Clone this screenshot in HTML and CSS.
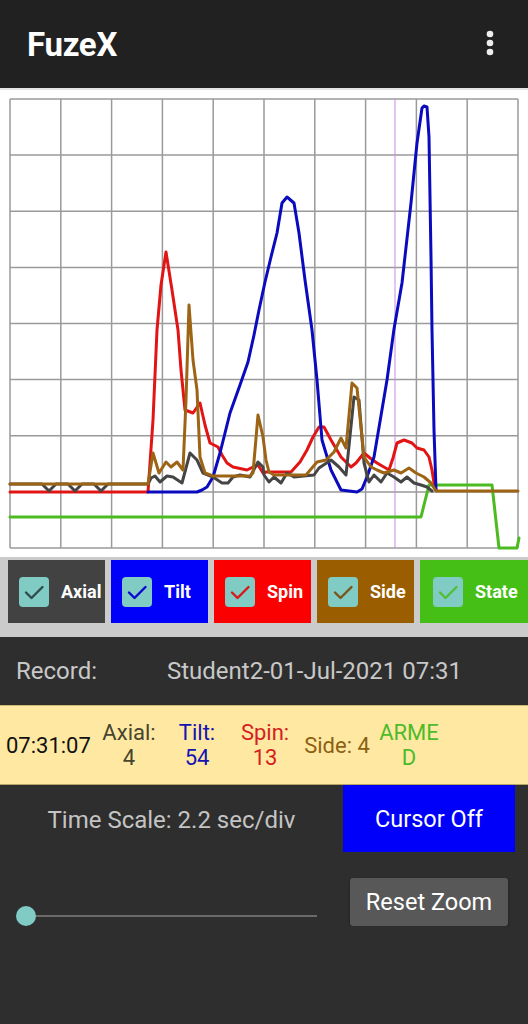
FILE: index.html
```html
<!DOCTYPE html>
<html>
<head>
  <meta charset="UTF-8">
  <title>FuzeX</title>
  <link rel="stylesheet" href="styles.css">
</head>
<body>
  <header class="app-bar">
    <h1 class="title">FuzeX</h1>
    <svg class="menu" width="8" height="26" viewBox="0 0 8 26">
      <circle cx="4" cy="4" r="3.3" fill="#eee"/>
      <circle cx="4" cy="13" r="3.3" fill="#eee"/>
      <circle cx="4" cy="22" r="3.3" fill="#eee"/>
    </svg>
  </header>

  <section class="chart-panel">
    <svg class="chart" width="528" height="467" viewBox="0 90 528 467">
      <g class="grid" stroke="#9a9a9a" stroke-width="1.5">
        <line x1="10" y1="99" x2="10" y2="548"/>
        <line x1="60.8" y1="99" x2="60.8" y2="548"/>
        <line x1="111.6" y1="99" x2="111.6" y2="548"/>
        <line x1="162.4" y1="99" x2="162.4" y2="548"/>
        <line x1="213.2" y1="99" x2="213.2" y2="548"/>
        <line x1="264" y1="99" x2="264" y2="548"/>
        <line x1="314.8" y1="99" x2="314.8" y2="548"/>
        <line x1="365.6" y1="99" x2="365.6" y2="548"/>
        <line x1="416.4" y1="99" x2="416.4" y2="548"/>
        <line x1="467.2" y1="99" x2="467.2" y2="548"/>
        <line x1="518" y1="99" x2="518" y2="548"/>
        <line x1="10" y1="99" x2="518" y2="99"/>
        <line x1="10" y1="155.1" x2="518" y2="155.1"/>
        <line x1="10" y1="211.3" x2="518" y2="211.3"/>
        <line x1="10" y1="267.4" x2="518" y2="267.4"/>
        <line x1="10" y1="323.5" x2="518" y2="323.5"/>
        <line x1="10" y1="379.6" x2="518" y2="379.6"/>
        <line x1="10" y1="435.8" x2="518" y2="435.8"/>
        <line x1="10" y1="491.9" x2="518" y2="491.9"/>
        <line x1="10" y1="548" x2="518" y2="548"/>
      </g>
      <line x1="395" y1="99" x2="395" y2="548" stroke="#c58ae0" stroke-width="1"/>

      <g fill="none" stroke-width="3" stroke-linejoin="round" stroke-linecap="round">
        <!-- state -->
        <polyline stroke="#4cbb22" points="10,517 421,517 429,485 492,485 499,548 517,548 519,538"/>
        <!-- spin -->
        <polyline stroke="#e21414" points="10,492 148,492 153,420 157,330 161,285 166,252 172,290 178,330 181,370 185,410 193,413 200,403 205,425 210,443 218,447 222,455 227,463 233,467 247,470 253,467 258,465 263,473 266,472 291,472 300,462 307,450 313,437 319,427 324,427 331,440 341,457 351,467 356,463 364,453 370,458 377,463 389,470 393,458 397,443 404,440 412,443 417,448 424,450 429,457 432,470 434,483 436,490"/>
        <!-- tilt -->
        <polyline stroke="#0a0abe" points="148,492 197,492 202,490 207,487 213,477 220,453 230,413 240,385 248,362 254,335 259,310 265,282 271,257 277,233 282,203 287,197 294,203 299,233 305,280 312,330 317,380 322,440 331,470 341,490 357,492 362,489 367,477 374,457 387,380 394,329 402,283 411,203 417,143 422,108 424,106 427,107 429,137 431,257 432,330 434,430 436,490"/>
        <!-- axial -->
        <polyline stroke="#454545" points="10,484 42,484 49,491 56,484 68,484 75,491 82,484 94,484 101,491 108,484 148,484 151,478 155,476 160,482 167,476 173,477 182,483 190,453 197,460 203,473 213,477 222,483 228,483 233,477 240,475 250,477 258,462 263,467 264,475 269,482 274,477 281,483 287,473 294,477 314,475 319,468 331,460 339,467 346,475 354,397 359,400 364,463 369,482 374,475 381,482 387,473 394,477 401,482 407,477 414,483 421,485 427,487 432,491"/>
        <!-- side -->
        <polyline stroke="#9c6414" points="10,484 148,484 153,453 159,473 166,462 171,467 177,462 183,470 186,400 189,305 193,360 197,390 200,457 205,473 213,476 250,476 253,473 258,415 263,437 266,460 269,472 274,475 306,475 317,462 326,460 334,452 341,438 346,448 352,383 357,388 364,457 371,467 377,470 384,473 394,470 401,473 409,468 416,473 424,477 431,483 436,491 518,491"/>
      </g>
    </svg>
  </section>

  <div class="legend">
    <label class="legend-item axial">
      <svg class="check" viewBox="0 0 30 30"><path d="M7 15.5l5.5 5.5L23.5 10" stroke="#2f4d4b"/></svg>
      <span class="legend-label">Axial</span>
    </label>
    <label class="legend-item tilt">
      <svg class="check" viewBox="0 0 30 30"><path d="M7 15.5l5.5 5.5L23.5 10" stroke="#0808d0"/></svg>
      <span class="legend-label">Tilt</span>
    </label>
    <label class="legend-item spin">
      <svg class="check" viewBox="0 0 30 30"><path d="M7 15.5l5.5 5.5L23.5 10" stroke="#d81818"/></svg>
      <span class="legend-label">Spin</span>
    </label>
    <label class="legend-item side">
      <svg class="check" viewBox="0 0 30 30"><path d="M7 15.5l5.5 5.5L23.5 10" stroke="#7a5418"/></svg>
      <span class="legend-label">Side</span>
    </label>
    <label class="legend-item state">
      <svg class="check" viewBox="0 0 30 30"><path d="M7 15.5l5.5 5.5L23.5 10" stroke="#52be36"/></svg>
      <span class="legend-label">State</span>
    </label>
  </div>

  <div class="record">
    <span class="record-label">Record:</span>
    <span class="record-name">Student2-01-Jul-2021 07:31</span>
  </div>

  <div class="readout">
    <span class="reading time">07:31:07</span>
    <span class="reading axial-val">Axial:<br>4</span>
    <span class="reading tilt-val">Tilt:<br>54</span>
    <span class="reading spin-val">Spin:<br>13</span>
    <span class="reading side-val">Side: 4</span>
    <span class="reading state-val">ARMED</span>
  </div>

  <div class="controls">
    <div class="controls-row">
      <span class="time-scale">Time Scale: 2.2 sec/div</span>
      <button class="btn-cursor">Cursor Off</button>
    </div>
    <div class="controls-row zoom-row">
      <div class="slider">
        <span class="slider-track"></span>
        <span class="slider-thumb"></span>
      </div>
      <button class="btn-reset">Reset Zoom</button>
    </div>
  </div>
</body>
</html>
```

FILE: styles.css
```css
body {
  margin: 0;
  background: #2e2e2e;
  font-family: Roboto, "Noto Sans", sans-serif;
  overflow: hidden;
}
.app-bar {
  height: 88px;
  background: #212121;
  border-bottom: 2px solid #e4e4e4;
  display: flex;
  align-items: center;
  justify-content: space-between;
  padding: 0 34px 0 27px;
}
.title {
  margin: 0;
  font-size: 33px;
  font-weight: 700;
  color: #fff;
  letter-spacing: -0.3px;
}
.menu {
  display: block;
  margin-top: -2px;
}
.chart-panel {
  background: #fff;
  height: 467px;
}
.chart {
  display: block;
}
.legend {
  height: 80px;
  box-sizing: border-box;
  padding: 3px 0 0 8px;
  background: #cbcbcb;
  display: flex;
  gap: 6px;
  overflow: hidden;
}
.legend-item {
  flex: 0 0 97px;
  height: 63px;
  box-sizing: border-box;
  padding-left: 11px;
  display: flex;
  align-items: center;
  color: #fff;
  font-size: 18px;
  font-weight: 700;
  white-space: nowrap;
}
.legend-item.axial { background: #424242; }
.legend-item.tilt { background: #0000fa; }
.legend-item.spin { background: #fb0000; }
.legend-item.side { background: #9a5d00; }
.legend-item.state { background: #45bf16; flex-basis: 120px; padding-left: 13px; }
.check {
  width: 30px;
  height: 30px;
  flex-shrink: 0;
  margin-right: 12px;
  background: #80cbc4;
  border-radius: 4px;
}
.check path {
  fill: none;
  stroke-width: 2.4;
  stroke-linecap: round;
  stroke-linejoin: round;
}
.record {
  height: 68px;
  display: flex;
  align-items: center;
  padding-left: 16px;
  color: #c8c8c8;
  font-size: 24px;
}
.record-label {
  width: 151px;
}
.readout {
  height: 80px;
  box-sizing: border-box;
  background: #ffe9a2;
  border-top: 1px solid #cbb977;
  border-bottom: 1px solid #b5a466;
  display: flex;
  align-items: center;
  gap: 4px;
  padding-left: 6px;
  font-size: 22px;
  line-height: 25px;
}
.reading {
  width: 64px;
  text-align: center;
}
.reading.time { width: 87px; text-align: left; color: #111; }
.axial-val { color: #47442f; }
.tilt-val { color: #1414b4; }
.spin-val { color: #d42020; }
.side-val { color: #8c6012; width: 72px; }
.state-val { color: #4cbb2a; word-break: break-all; }
.controls-row {
  display: flex;
  align-items: center;
}
.time-scale {
  flex: 1;
  text-align: center;
  color: #c4c4c4;
  font-size: 24px;
  padding-top: 2px;
}
.btn-cursor {
  width: 172px;
  height: 67px;
  margin-right: 13px;
  border: none;
  background: #0000fa;
  color: #fff;
  font-family: inherit;
  font-size: 23.5px;
}
.zoom-row {
  align-items: flex-start;
  margin-top: 26px;
}
.slider {
  flex: 1;
  position: relative;
  height: 20px;
  margin: 28px 0 0 16px;
}
.slider-track {
  position: absolute;
  left: 10px;
  right: 0;
  top: 9px;
  height: 2px;
  background: #6a6a6a;
}
.slider-thumb {
  position: absolute;
  left: 0;
  top: 0;
  width: 20px;
  height: 20px;
  border-radius: 50%;
  background: #80cbc4;
}
.btn-reset {
  width: 158px;
  height: 48px;
  margin: 0 20px 0 33px;
  border: none;
  border-radius: 3px;
  background: #585858;
  color: #fff;
  font-family: inherit;
  font-size: 23.5px;
  box-shadow: 0 2px 3px rgba(0, 0, 0, 0.35);
}
```
